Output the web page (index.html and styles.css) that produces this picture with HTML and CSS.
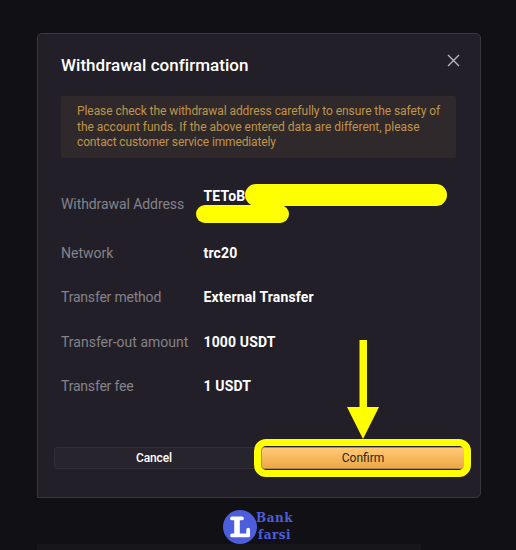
FILE: index.html
```html
<!DOCTYPE html>
<html lang="en">
<head>
  <meta charset="UTF-8" />
  <meta name="viewport" content="width=device-width, initial-scale=1.0" />
  <title>Withdrawal confirmation</title>
  <link rel="stylesheet" href="styles.css">
</head>
<body>
  <div class="modal">
    <div class="header">
      <h1>Withdrawal confirmation</h1>
      <svg class="close" viewBox="0 0 13 13" width="13" height="13">
        <path d="M1 1L12 12M12 1L1 12" fill="none" stroke="#b6b6b9" stroke-width="1.4" />
      </svg>
    </div>

    <p class="notice"><span class="n1">Please check the withdrawal address carefully to ensure the safety of</span><br><span class="n2">the account funds. If the above entered data are different, please</span><br><span class="n3">contact customer service immediately</span></p>

    <dl class="details">
      <div class="row address">
        <dt>Withdrawal Address</dt>
        <dd>TEToB<i class="mask mask-long"></i><i class="mask mask-short"></i></dd>
      </div>
      <div class="row"><dt>Network</dt><dd>trc20</dd></div>
      <div class="row"><dt class="tight">Transfer method</dt><dd>External Transfer</dd></div>
      <div class="row"><dt>Transfer-out amount</dt><dd>1000 USDT</dd></div>
      <div class="row"><dt class="tight">Transfer fee</dt><dd>1 USDT</dd></div>
    </dl>

    <div class="actions">
      <button class="btn cancel">Cancel</button>
      <div class="confirm-wrap">
        <button class="btn confirm">Confirm</button>
        <div class="highlight"></div>
        <svg class="arrow" viewBox="0 0 32 99" width="32" height="99">
          <path d="M12.5 0H20V67H32L16 99L0 67H12.5Z" fill="#ffff00" />
        </svg>
      </div>
    </div>
  </div>

  <div class="brand">
    <svg viewBox="0 0 34 34" width="34" height="34">
      <circle cx="17" cy="17" r="17" fill="#4c5edb" />
      <path d="M9 8.4H19M9 25.4H25.2V19.7" fill="none" stroke="#fff" stroke-width="3.7" stroke-linecap="round" stroke-linejoin="round" />
      <path d="M14 8V25.5" stroke="#fff" stroke-width="5.6" />
    </svg>
    <div class="brand-name"><span>Bank</span><span class="farsi">farsi</span></div>
  </div>
  <div class="page-panel"></div>
</body>
</html>
```

FILE: styles.css
```css
* {
  box-sizing:border-box;
}
body {
  margin:0;
  height:550px;
  overflow:hidden;
  padding-top:33px;
  background:#111015;
  color:#fff;
  font-family:Roboto, sans-serif;
}
.modal {
  width:444px;
  height:465px;
  margin-left:37px;
  padding:0 15px 0 16px;
  background:#221f29;
  border:1px solid #39373f;
  border-radius:5px 5px 5px 1px;
}
.header {
  display:flex;
  justify-content:space-between;
  height:62px;
  padding:20px 5px 0 7px;
}
h1 {
  margin:0;
  font-size:17px;
  line-height:23px;
  font-weight:500;
  letter-spacing:.04px;
}
.notice {
  width:395px;
  height:62px;
  margin:0 0 0 7px;
  padding:8px 0 0 16px;
  background:#2f292c;
  border-radius:2px;
  color:#c09548;
  font-size:12px;
  line-height:15.5px;
  white-space:nowrap;
}
.n1 {
  letter-spacing:-.07px;
}
.n2 {
  letter-spacing:-.01px;
}
.n3 {
  letter-spacing:-.13px;
}
.details {
  margin:0 0 0 7px;
  padding-top:23px;
  font-size:14px;
}
.row {
  display:flex;
  align-items:center;
  height:44.3px;
}
.row.address {
  height:50px;
}
dt {
  width:142.5px;
  color:#85838a;
}
.tight {
  letter-spacing:-.2px;
}
dd {
  position:relative;
  margin:0;
  font-weight:700;
  letter-spacing:.15px;
}
.address dt {
  padding-bottom:4px;
  letter-spacing:-.08px;
}
.address dd {
  align-self:flex-start;
  padding-top:7px;
}
.mask {
  position:absolute;
  background:#ffff00;
  border-radius:11px;
}
.mask-long {
  left:41px;
  top:3px;
  width:202px;
  height:22px;
}
.mask-short {
  left:-8px;
  top:24px;
  width:93px;
  height:18px;
}
.actions {
  display:flex;
  gap:4px;
  margin-top:39px;
}
.btn {
  display:block;
  height:22px;
  padding:0;
  border-radius:3px;
  font-family:inherit;
  font-size:12px;
}
.cancel {
  width:203px;
  padding-right:3px;
  background:#27242e;
  border:1px solid #312e38;
  color:#fff;
  font-weight:500;
  letter-spacing:-.1px;
}
.confirm-wrap {
  position:relative;
}
.confirm {
  width:204px;
  background:linear-gradient(#ffc977, #eea844);
  border:1px solid #b28c4d;
  color:#2c241c;
}
.highlight {
  position:absolute;
  left:-7px;
  top:-8px;
  width:217px;
  height:38px;
  border:7px solid #ffff00;
  border-radius:12px;
}
.arrow {
  position:absolute;
  left:86px;
  top:-107px;
}
.brand {
  display:flex;
  margin:12px 0 0 223px;
}
.brand-name {
  display:flex;
  flex-direction:column;
  margin-left:-1px;
  color:#4c5edb;
  font-family:"DejaVu Serif", serif;
  font-size:12px;
  line-height:16.5px;
  font-weight:700;
  letter-spacing:.5px;
}
.farsi {
  margin-left:2px;
}
.page-panel {
  width:384px;
  height:6px;
  margin-left:37px;
  background:#17161a;
}
```
